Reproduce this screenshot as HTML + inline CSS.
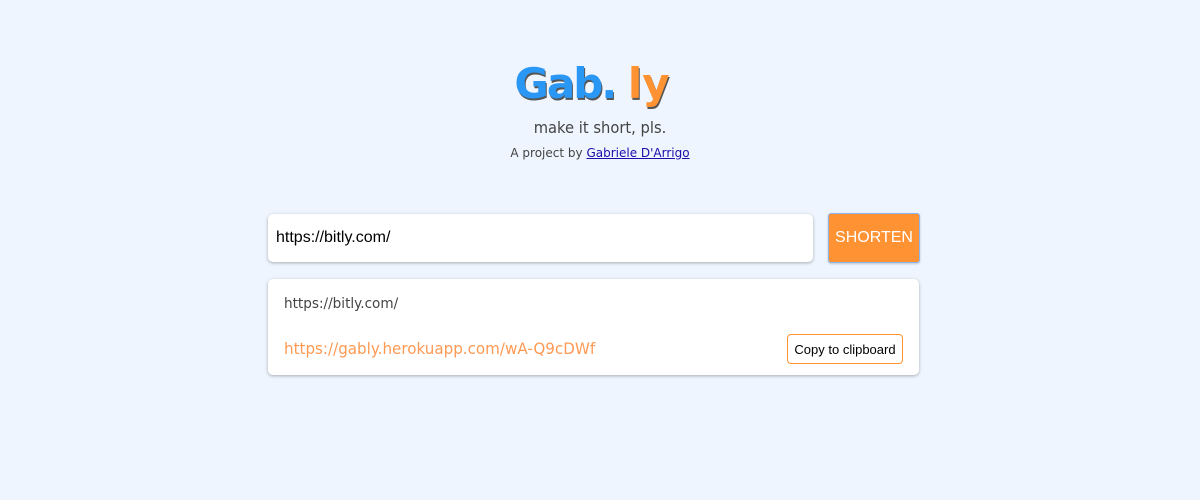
<!DOCTYPE html>
<html><head><style>
body{margin:0;width:1200px;height:500px;background:#eef5fe;font-family:"Liberation Sans",sans-serif;position:relative;overflow:hidden}
.logo{position:absolute;left:-8px;width:1200px;top:56px;text-align:center;font-family:"DejaVu Sans",sans-serif;font-weight:bold;font-size:42px;letter-spacing:-2px;line-height:56px}
.logo .b{color:#2b97f5;text-shadow:1px 2px 0 #555}
.logo .o{color:#ff9233;text-shadow:1px 2px 0 #555;letter-spacing:0}
.sub{position:absolute;left:0;width:1200px;top:118px;text-align:center;font-size:16px;color:#444;font-family:"DejaVu Sans",sans-serif;transform:scaleX(.92)}
.by{position:absolute;left:0;width:1200px;top:146px;text-align:center;font-size:12px;color:#444;font-family:"DejaVu Sans",sans-serif}
.by a{color:#1a0dab;text-decoration:underline}
.input{position:absolute;left:268px;top:214px;width:545px;height:48px;background:#fff;border-radius:5px;box-shadow:0 1px 3px rgba(0,0,0,.3)}
.input span{position:absolute;left:8px;top:15px;font-size:16px;color:#000}
.btn{position:absolute;left:828px;top:213px;width:90px;height:48px;background:#ff9233;border:1px solid #8ab4f0;border-radius:3px;color:#fff;font-size:16px;text-align:center;line-height:48px;box-shadow:0 1px 2px rgba(0,0,0,.2)}
.card{position:absolute;left:268px;top:279px;width:651px;height:96px;background:#fff;border-radius:5px;box-shadow:0 1px 3px rgba(0,0,0,.3)}
.orig{position:absolute;left:16px;top:17px;font-size:14px;color:#444;font-family:"DejaVu Sans",sans-serif;transform:scaleX(.97);transform-origin:left}
.short{position:absolute;left:16px;top:60px;font-size:16px;color:#ff9a55;font-family:"DejaVu Sans",sans-serif;transform:scaleX(.945);transform-origin:left}
.copy{position:absolute;left:519px;top:55px;width:114px;height:28px;border:1px solid #ff9233;border-radius:4px;font-size:13px;line-height:29px;text-align:center;color:#000}
</style></head><body>
<div class="logo"><span class="b">Gab.</span> <span class="o">ly</span></div>
<div class="sub">make it short, pls.</div>
<div class="by">A project by <a>Gabriele D'Arrigo</a></div>
<div class="input"><span>https://bitly.com/</span></div>
<div class="btn">SHORTEN</div>
<div class="card">
<div class="orig">https://bitly.com/</div>
<div class="short">https://gably.herokuapp.com/wA-Q9cDWf</div>
<div class="copy">Copy to clipboard</div>
</div>
</body></html>
